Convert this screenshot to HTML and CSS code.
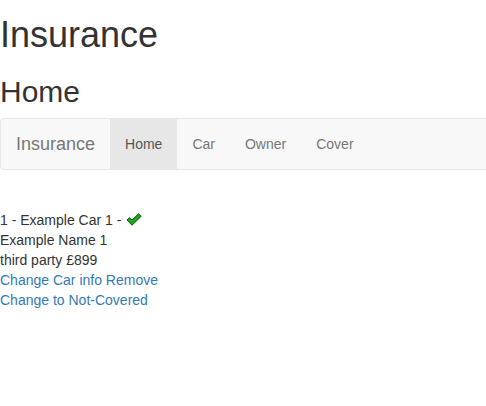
FILE: index.html
```html
<!DOCTYPE html>
<html>
<head>
<meta charset="utf-8">
<link rel="stylesheet" href="styles.css">
</head>
<body>
<h1 class="title">Insurance</h1>
<h2 class="subtitle">Home</h2>
<nav class="navbar">
  <a class="brand" href="#">Insurance</a>
  <ul class="nav">
    <li class="active"><a href="#">Home</a></li>
    <li><a href="#">Car</a></li>
    <li><a href="#">Owner</a></li>
    <li><a href="#">Cover</a></li>
  </ul>
</nav>
<div class="content">
  <div class="line">1 - Example Car 1 - <svg class="ok" width="16" height="13" viewBox="0 0 16 13"><path d="M1 7 L3.6 4.6 L6 7 L12.6 0.8 L15.2 3.3 L6 12.2 Z" fill="#1ea51e" stroke="#0b5a0b" stroke-width="1" stroke-linejoin="round"/></svg></div>
  <div class="line">Example Name 1</div>
  <div class="line">third party £899</div>
  <div class="line"><a href="#">Change Car info</a> <a href="#">Remove</a></div>
  <div class="line"><a href="#">Change to Not-Covered</a></div>
</div>
</body>
</html>
```
FILE: styles.css
```css
html {
  overflow-x: hidden;
}
html, body {
  margin: 0;
  padding: 0;
  background: #fff;
}
body {
  font-family: "Liberation Sans", Arial, sans-serif;
  font-size: 14px;
  line-height: 20px;
  color: #333;
}
a {
  color: #337ab7;
  text-decoration: none;
}
.title {
  font-size: 36px;
  font-weight: 500;
  line-height: 1.1;
  margin: 15px 0 10px;
}
.subtitle {
  font-size: 30px;
  font-weight: 500;
  line-height: 1.1;
  margin: 20px 0 10px;
}
.navbar {
  display: flex;
  align-items: stretch;
  min-height: 50px;
  background: #f8f8f8;
  border: 1px solid #e7e7e7;
  border-radius: 4px;
  margin-bottom: 20px;
  margin-right: -10px;
}
.brand {
  display: block;
  padding: 15px;
  height: 50px;
  box-sizing: border-box;
  font-size: 18px;
  line-height: 20px;
  color: #777;
}
.nav {
  display: flex;
  list-style: none;
  margin: 0;
  padding: 0;
}
.nav a {
  display: block;
  padding: 15px;
  line-height: 20px;
  color: #777;
}
.nav .active a {
  background: #e7e7e7;
  color: #555;
}
.content {
  padding-top: 20px;
}
.ok {
  vertical-align: -1px;
  margin-left: 1px;
}
```
